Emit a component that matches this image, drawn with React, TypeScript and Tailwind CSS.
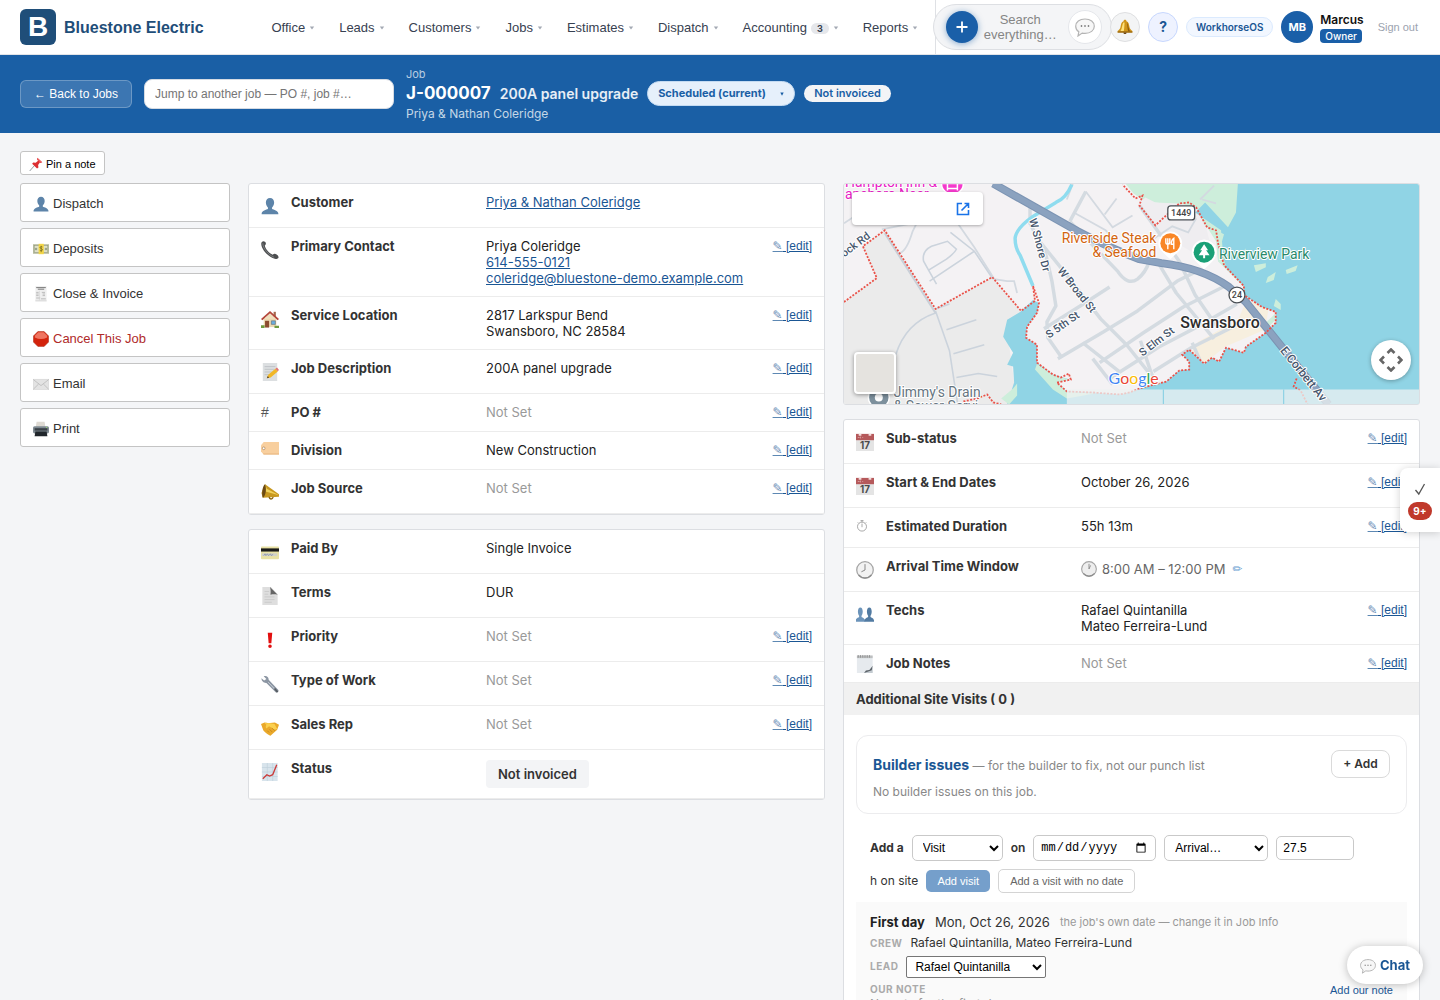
import type { ReactNode } from "react";

const navItems = [
  { label: "Office" },
  { label: "Leads" },
  { label: "Customers" },
  { label: "Jobs" },
  { label: "Estimates" },
  { label: "Dispatch" },
  { label: "Accounting", count: 3 },
  { label: "Reports" },
];

const sideActions = [
  { label: "Dispatch", icon: "person" },
  { label: "Deposits", icon: "money" },
  { label: "Close & Invoice", icon: "receipt" },
  { label: "Cancel This Job", icon: "stop", danger: true },
  { label: "Email", icon: "mail" },
  { label: "Print", icon: "printer" },
];

const bust = "M10 1c2.800 0 4.600 2.100 4.600 5.200 0 2.400-1 4.300-2.300 5.400v1.700c1.800.900 6.700 1.600 7 5.200v.800H.700v-.800c.300-3.600 5.200-4.300 7-5.200v-1.700C6.400 10.500 5.400 8.600 5.400 6.200 5.400 3.100 7.200 1 10 1z";

const calendar = (
  <>
    <rect x="0" y="1" width="20" height="19" fill="#e4e4e4" />
    <rect x="0" y="1" width="20" height="7" fill="#b5595b" />
    <path d="M3 1h3v2H3zM14 1h3v2h-3z" fill="#f3dcdc" />
    <path d="M2 5h2M5 4v2M7 5h1" stroke="#e2b4b4" strokeWidth=".8" />
    <text x="10" y="18" fontSize="11" fontWeight="700" textAnchor="middle" fill="#4b4b4b">17</text>
  </>
);

const drawings: Record<string, ReactNode> = {
  person: <path d={bust} fill="#5d84a9" />,
  people: (
    <>
      <g transform="translate(-1 2) scale(.58 .86)"><path d={bust} fill="#6c94ba" /></g>
      <g transform="translate(9 2) scale(.58 .86)"><path d={bust} fill="#527ba2" /></g>
    </>
  ),
  money: (
    <>
      <rect x="0" y="4" width="20" height="12" fill="#b8bda0" />
      <rect x="1.500" y="5.500" width="17" height="9" fill="#dfe0c8" stroke="#8e967b" strokeWidth=".7" />
      <rect x="7" y="3.500" width="6.500" height="13" fill="#f3d648" />
      <circle cx="3.800" cy="10" r="1.600" fill="#9ba58a" />
      <circle cx="16.200" cy="10" r="1.600" fill="#9ba58a" />
      <path d="M11.800 7.500c-1-.8-3-.5-3 .8s3 1.100 3 2.500-2.200 1.700-3.200.7M10.200 6v8" fill="none" stroke="#6b601f" strokeWidth=".9" />
    </>
  ),
  receipt: (
    <>
      <path d="M3 0h14v20H3z" fill="#efefef" />
      <path d="M4 2h12M6 4h8" stroke="#777" strokeWidth="1.200" />
      <path d="M4 8h3M4 10h3M4 12h3M4 15h5M11 8h4M12 10h3M12 12h3M10 16h6" stroke="#a9a9a9" strokeWidth=".9" />
      <path d="M8 6v12M3 18h14" stroke="#d0d0d0" strokeWidth=".7" />
    </>
  ),
  stop: (
    <>
      <path d="M6.200.500h7.600l5.700 5.700v7.600l-5.700 5.700H6.200L.500 13.800V6.200z" fill="#d3230c" stroke="#a62b16" strokeWidth=".6" />
      <path d="M6.600 1.500h6.800l4.300 4.500v2q-7.700 4-15.400 0V6z" fill="#ef7561" />
    </>
  ),
  mail: (
    <>
      <rect x="0" y="4" width="20" height="13" fill="#e3e3e3" stroke="#cfcfcf" strokeWidth=".6" />
      <path d="M.5 4.500 10 12l9.500-7.500M.5 16.500 7 10M19.500 16.500 13 10" fill="none" stroke="#b5b5b5" strokeWidth=".9" />
    </>
  ),
  printer: (
    <>
      <path d="M4.500 1h10l1 7h-12z" fill="#dedad3" />
      <rect x="0" y="6.500" width="20" height="9" rx="2" fill="#7f8a92" />
      <rect x="2" y="9" width="16" height="3" fill="#3a4147" />
      <path d="M3 13h14l1 6H2z" fill="#20262b" />
      <circle cx="17" cy="8" r=".7" fill="#9fdd6c" />
    </>
  ),
  pin: (
    <>
      <path d="m8 12-7 8" stroke="#8b9299" strokeWidth="1.300" />
      <path d="m12 1 7 6.500-2.500 1-1-.5-2.500 3.500.5 3.500-2 1.500-7-7L6 7.800l3.500.4L13 5.500l-1.500-1.500z" fill="#dc2f33" />
      <path d="m12.500 2 5.500 5-2 .5-4-3.500z" fill="#f1686a" />
    </>
  ),
  phone: (
    <>
      <path d="M1 1c1.500-1.300 4-.4 4.400 1.500.2 1.300-.7 2-1.200 2.900.9 3.900 5 8.400 8.800 10 .9-.8 1.800-1.400 3-1 2.100.6 4 2.800 3.400 4.300-.9 1.700-3.400 1.500-5 .8C7.600 16.900.6 9.200.300 3.500.200 2.600.300 1.600 1 1z" fill="#4c4e50" />
      <path d="M2 2.500c-.2 5 6 13 12.500 15.500" fill="none" stroke="#8b8e90" strokeWidth=".8" />
    </>
  ),
  house: (
    <>
      <path d="M3 9h14v10H3z" fill="#ecd8b0" />
      <path d="M14 2h2.500v6H14z" fill="#a5694e" />
      <path d="M10 1 0 10l1.500 1.500L10 4l8.500 7.500L20 10z" fill="#b4473b" />
      <path d="m10 4 6.500 5.800h-13z" fill="#f0dfbc" />
      <path d="M4.500 12H9v7.500H4.500z" fill="#8c4b2f" />
      <path d="M11.500 12H16v4h-4.500z" fill="#6aaede" stroke="#59636a" strokeWidth=".6" />
      <path d="M0 17h4v3H0zM15 17.500h5V20h-5z" fill="#6f9a3e" />
    </>
  ),
  memo: (
    <>
      <path d="M2 0h16v20H2z" fill="#dcdfe1" />
      <path d="M4 4h12M4 7h11M4 10h8M4 13h5" stroke="#b9bdc1" strokeWidth=".9" />
      <path d="m6.500 17 1.500-4 8-6.500 2.700 3-8 6.500z" fill="#f1b727" />
      <path d="m16 6.500 1.800-1.500 2.200 2.800-1.500 1.500z" fill="#e17272" />
      <path d="m6.500 17 1-2.600 1.600 1.900z" fill="#574632" />
    </>
  ),
  tag: (
    <>
      <path d="M3 0H20v14H3L0 10.500v-7z" fill="#f8cf9e" />
      <path d="M3 14H20v-1.200H2z" fill="#e8b67f" />
      <circle cx="3" cy="7" r="1.500" fill="#fff" stroke="#a98258" strokeWidth=".8" />
    </>
  ),
  horn: (
    <>
      <path d="M4.500 1.500 20 12.500v2.800L2 16.500.500 11z" fill="#c8981f" />
      <path d="m4.500 1.500 2 5L20 13.500l-15-4z" fill="#f1d25a" />
      <path d="M4.500 1.500C1.500 3 .5 13 2 16.500c2-.5 5-8 2.500-15z" fill="#6c4a13" />
      <path d="M9 15.500c.5 3 3.500 3.200 4.500.2" fill="none" stroke="#8b6716" strokeWidth="1.600" />
    </>
  ),
  card: (
    <>
      <rect x="0" y="4" width="20" height="14" rx="1" fill="#e8e1a4" />
      <rect x="0" y="6" width="20" height="3.500" fill="#191919" />
      <path d="M1 11.500h17v3H1z" fill="#d0d1ca" />
      <path d="m3 14 1.500-2 1 2 1.500-2 1.500 2 2-2 1 2 2-1.500" fill="none" stroke="#7682a3" strokeWidth=".7" />
    </>
  ),
  page: (
    <>
      <path d="M1.500 0H11l7.500 8v12h-17z" fill="#dedede" />
      <path d="M10 0c.8 3 1 5.500.5 8.500 3-.6 5.500-.5 8 0z" fill="#666" />
      <path d="M4 5h5M4 8h4M4 11h11M4 14h11M4 17h8" stroke="#c4c4c4" strokeWidth=".8" />
    </>
  ),
  bang: <path d="M7.500 2h5l-1 11.500h-3zM10 15a2 2 0 1 1 0 4 2 2 0 0 1 0-4z" fill="#e20f0f" />,
  wrench: (
    <>
      <path d="M3 1.500c2.500-1.500 5.800.5 5.500 3.800l10.800 11.300c.8 1.500-1.300 3.700-3 2.700L6 8.800C3.300 9.200.200 6.500.500 3.500L3.500 6 6 4.500z" fill="#8c96a3" />
      <path d="m8 8 9 9.500" stroke="#cfd5db" strokeWidth="1" />
      <path d="m15 15 3.500 4" stroke="#565c62" strokeWidth="2" />
    </>
  ),
  shake: (
    <>
      <path d="M0 5.500 4 4c2 .3 3.500.8 6 .5l5.500-.5L20 6.500 18 12l-7.500 6.500c-1.500 0-6-3.500-8-6z" fill="#eaa92a" />
      <path d="M4 4.500c3 .5 6-.5 11 1l3 5.500-3 1-6-4-3 2.500C5 9.500 5 8 6 6.500z" fill="#fbd04e" />
      <path d="m7 13 2 2M9.500 11.500l3 3M12 10l3.500 3" stroke="#bf7f18" strokeWidth=".8" />
    </>
  ),
  chart: (
    <>
      <path d="M1 0h17.500v20H1z" fill="#d8e4ec" />
      <path d="M1 5h17.500M1 10h17.500M1 15h17.500M7 0v20M13 0v20" stroke="#bdcfda" strokeWidth=".7" />
      <path d="m2 17.500 4.500-4.500 3 1.500L13 13l4.500-11" fill="none" stroke="#cb3a39" strokeWidth="1.500" />
    </>
  ),
  calendar,
  stopwatch: (
    <>
      <circle cx="10" cy="11" r="7.500" fill="none" stroke="#888" strokeWidth="1.200" />
      <path d="M10 3.500V1M7.500 1h5M10 6v6M15.500 5.500 17 4M4.500 5.500 3 4" stroke="#888" strokeWidth="1.200" />
    </>
  ),
  clock8: (
    <>
      <circle cx="10" cy="10" r="9.200" fill="#f2f2f2" stroke="#a4a4a4" strokeWidth="1.400" />
      <path d="M10 3.500V10l-4 2" fill="none" stroke="#888" strokeWidth="1.100" />
      <path d="M3 15.500a9 9 0 0 0 14 0" fill="none" stroke="#8d8d8d" strokeWidth="1.400" />
    </>
  ),
  clock1: (
    <>
      <circle cx="10" cy="10" r="9.200" fill="#eee" stroke="#a4a4a4" strokeWidth="1.400" />
      <path d="M10 3.500V10l2-4.500" fill="none" stroke="#888" strokeWidth="1.100" />
      <path d="M3 15.500a9 9 0 0 0 14 0" fill="none" stroke="#8d8d8d" strokeWidth="1.400" />
    </>
  ),
  notepad: (
    <>
      <path d="M1 1h17.500v19H1z" fill="#e6eaee" />
      <path d="M1 .5h17.500v3H1z" fill="#bdbfc0" />
      <path d="M2.500 0v3M5 0v3M7.500 0v3M10 0v3M12.500 0v3M15 0v3" stroke="#7d7d7d" strokeWidth=".7" />
      <path d="m9 20 9.500-6V20z" fill="#c3cad0" />
      <path d="m9 20 2-2.800 4-.5 3.500-4.700-1 5z" fill="#5b6268" />
    </>
  ),
  bubble: (
    <>
      <path d="M10 2c5.500 0 9.300 3 9.300 7.200s-3.800 7.200-9.300 7.200c-1 0-2-.1-2.800-.3L3 19l.8-4.200C1.800 13.500.700 11.500.700 9.200.700 5 4.500 2 10 2z" fill="#f7f7f7" stroke="#b4b4b4" strokeWidth="1.200" />
      <path d="M5.800 8.300h1.400v1.400H5.800zM9.300 8.300h1.400v1.400H9.300zM12.800 8.300h1.400v1.400h-1.400z" fill="#666" />
    </>
  ),
  bell: (
    <>
      <path d="M10 1c1.300 0 1.800.8 1.800 1.700 2.700 1 3.300 3.700 3.700 6.800.4 2.700 1.500 4 3.700 5.500v2H.800v-2c2.200-1.500 3.300-2.800 3.700-5.500.4-3.100 1-5.800 3.700-6.800C8.200 1.800 8.700 1 10 1z" fill="#d0951a" />
      <path d="M8 4.500c-1.500 2-1.500 7-3.500 10.500h4c.8-3.500.6-7 1-10.500z" fill="#ffe27a" />
      <path d="M12.500 4c2 3 1.500 8 4 11.500H14c-1-3.500-1-7.500-1.500-11.500z" fill="#8d5c10" />
      <path d="M.8 15.500h18.400V17H.800z" fill="#94620f" />
      <path d="M8 17h4c0 2.500-4 2.500-4 0z" fill="#6a4410" />
    </>
  ),
};

function Glyph({ name, className = "size-[18px]" }: { name: string; className?: string }) {
  return (
    <svg viewBox="0 0 20 20" className={`shrink-0 ${className}`} aria-hidden="true">
      {drawings[name]}
    </svg>
  );
}

function EditLink() {
  return (
    <a
      href="#edit"
      className="block font-['Liberation_Sans',sans-serif] text-xs leading-4 text-[#1a5694] underline"
    >
      <span className="font-['DejaVu_Sans',sans-serif] opacity-70">✎</span> [edit]
    </a>
  );
}

type RowProps = { icon: string; label: string; children?: ReactNode; edit?: boolean; size?: "sm" | "md" | "lg" };

function Row({ icon, label, children, edit, size = "lg" }: RowProps) {
  const heights = { sm: "h-[17px]", md: "h-[19px]", lg: "h-[23px] pt-[3px]" };
  return (
    <div className="grid grid-cols-[18px_183px_1fr_auto] gap-x-3 border-b border-[#ececec] px-3 py-2.5 text-[13px] leading-4">
      <div className={heights[size]}>
        {icon === "#" ? (
          <span className="font-['Liberation_Sans',sans-serif] text-sm leading-4 text-[#555]">#</span>
        ) : (
          <Glyph name={icon} className={icon === "stopwatch" ? "mt-0.5 size-3" : "size-[18px]"} />
        )}
      </div>
      <dt className="font-bold text-[#333]">{label}</dt>
      <dd className="text-[#222]">{children ?? <span className="text-[#999]">Not Set</span>}</dd>
      <dd>{edit && <EditLink />}</dd>
    </div>
  );
}

function TopBar() {
  return (
    <header className="flex h-[55px] shrink-0 items-center border-b border-[#e2e4e8] bg-white pl-5 pr-[22px] font-['Liberation_Sans',sans-serif]">
      <a href="#home" className="flex shrink-0 items-center gap-2">
        <span className="flex size-9 items-center justify-center rounded-md bg-[#1f4e79] text-[28px] font-bold leading-none text-white">
          B
        </span>
        <span className="pt-0.5 text-base font-bold text-[#1f4e79]">Bluestone Electric</span>
      </a>
      <nav className="flex flex-1 shrink-0 items-center justify-end pr-[5px] pt-0.5 text-[13px] text-[#374151]">
        {navItems.map((item) => (
          <a key={item.label} href={`#${item.label}`} className="flex items-center gap-1 px-3">
            {item.label}
            {item.count && (
              <span className="rounded-full bg-[#e5e7eb] px-1.5 font-['Inter',sans-serif] text-[9px] font-bold leading-[11px] text-[#374151]">
                {item.count}
              </span>
            )}
            <svg viewBox="0 0 6 4" className="h-1 w-1.5" aria-hidden="true">
              <path d="M.8.500h4.400L3 3.500z" fill="#a3a9b3" />
            </svg>
          </a>
        ))}
      </nav>
      <div className="flex h-full shrink-0 items-center border-l border-[#dfe1e5] font-['Inter',sans-serif]">
        <div className="-ml-[3px] flex h-[46px] w-[179px] items-center rounded-full border border-[#dddfe3] bg-[#f4f5f7] px-3 pr-[9px]">
          <button
            aria-label="New"
            className="flex size-8 items-center justify-center rounded-full bg-[#1a5fa8] shadow-[0_1px_6px_rgba(26,95,168,0.5)]"
          >
            <svg viewBox="0 0 12 12" className="size-3" aria-hidden="true">
              <path d="M6 .5v11M.5 6h11" stroke="#fff" strokeWidth="1.800" />
            </svg>
          </button>
          <button className="ml-0.5 w-20 text-center font-['Liberation_Sans',sans-serif] text-[13px] leading-[15px] text-[#858585]">
            Search everything…
          </button>
          <button
            aria-label="Messages"
            className="ml-auto flex size-[34px] items-center justify-center rounded-full border border-[#e5e7eb] bg-white"
          >
            <Glyph name="bubble" className="size-5" />
          </button>
        </div>
        <button
          aria-label="Notifications"
          className="-ml-0.5 flex size-[30px] items-center justify-center rounded-full border border-[#dedfe1] bg-[#f3f4f5]"
        >
          <Glyph name="bell" className="size-4" />
        </button>
        <button className="ml-2 size-[30px] rounded-full border border-[#c7d7fe] bg-[#eef2ff] text-sm font-bold text-[#1a5694]">?</button>
        <a
          href="#workhorse"
          className="ml-2 w-[87px] rounded-full border border-[#dbeafe] bg-[#f2f7ff] text-center text-[10px] font-semibold leading-[18px] text-[#1a5694]"
        >
          WorkhorseOS
        </a>
        <span className="ml-2 flex size-8 items-center justify-center rounded-full bg-[#1a5fa8] text-[11px] font-bold text-white">MB</span>
        <div className="ml-[7px] flex flex-col items-start">
          <span className="text-xs font-semibold leading-[18px] text-[#111]">Marcus</span>
          <span className="rounded bg-[#1a5fa8] px-[5px] text-[10px] font-medium leading-[14px] text-white">Owner</span>
        </div>
        <button className="ml-3.5 font-['Liberation_Sans',sans-serif] text-[11px] text-[#9ca3af]">Sign out</button>
      </div>
    </header>
  );
}

function JobBar() {
  return (
    <section className="flex shrink-0 items-center gap-3 bg-[#1a5fa5] px-5 py-3 text-white">
      <a
        href="#jobs"
        className="w-28 rounded-md border border-white/25 bg-white/15 text-center font-['Liberation_Sans',sans-serif] text-xs leading-[26px]"
      >
        ← Back to Jobs
      </a>
      <input
        type="search"
        aria-label="Jump to another job"
        placeholder="Jump to another job — PO #, job #…"
        className="h-[30px] w-[250px] rounded-lg border border-[#d5dbe3] bg-white px-2.5 font-['Liberation_Sans',sans-serif] text-xs text-[#222] placeholder:text-[#757575]"
      />
      <div>
        <p className="text-[11px] leading-[14px] text-white/70">Job</p>
        <div className="flex h-[25px] items-center gap-[9px]">
          <h1 className="text-[17px] font-bold">J-000007</h1>
          <span className="text-sm font-semibold text-white/90">200A panel upgrade</span>
          <div className="flex h-[25px] items-center rounded-full border border-[#c4dbf2] bg-[#e6f0fb] pl-2.5 pr-2 text-[#1a5fa5]">
            <select aria-label="Job status" className="w-[120px] appearance-none text-[11px] font-bold">
              <option>Scheduled (current)</option>
            </select>
            <svg viewBox="0 0 4 4" className="mx-0.5 size-1" aria-hidden="true">
              <path d="M.3.500h3.400L2 3.700z" fill="#1a5fa5" />
            </svg>
          </div>
          <span className="rounded-full bg-[#f3f4f6] px-2.5 text-[11px] font-semibold leading-[17px] text-[#1a5fa5]">Not invoiced</span>
        </div>
        <p className="text-xs leading-[15px] text-white/75">Priya &amp; Nathan Coleridge</p>
      </div>
    </section>
  );
}

function MapDrawing() {
  const halo = { stroke: "#fff", strokeWidth: 2, paintOrder: "stroke" as const, strokeLinejoin: "round" as const };
  const highway = "M150 0l85 48q30 16 62 28l22 4q42 5 68 24l17 15 36 45 47 58";
  return (
    <svg
      viewBox="0 0 578 222"
      preserveAspectRatio="xMidYMid slice"
      className="block size-full font-['Roboto',sans-serif]"
      role="img"
      aria-label="Map of Swansboro"
    >
      <rect width="578" height="222" fill="#f4f2f4" />
      <path d="M0 119 33 95 19 63 41 47 92 126l57-32 29 34-14 20 10 74H0z" fill="#ebebeb" />
      <path d="m283 0 8 10 12 8 38 4 24 22 9 4 2 30 26 26 10-104z" fill="#cdeedb" />
      <path d="m303 14 10 5 24 1 17 4 10 20 4 16-2 18-52-30-18-28z" fill="#efedf0" />
      <path d="m405 117 22 8-4 22-40 17-20 16-15-9 8-12 40-22z" fill="#f7efdf" />

      {/* streets */}
      <g fill="none" stroke="#d4dbe1" strokeWidth="3.500" strokeLinejoin="round">
        <path d="m187 24 0 16 16 32 6 26 4 25-9 16 1 16 14 20M195 56l29 36 34 44 26 26 24 30M227 38l48 50q10 15 20 8 8-6 12-18M297 22l40 56 16 34 22 32M243 8l-16 30M240 160l38 30M316 80l18 30 38 46" />
        <path d="m215 176 46-27 34-21 40-30 22-11M257 180l44-30 40-26 44-22M267 196l50-32 40-21 38-22M201 146l38-24 28-18M250 176l20 26M298 158l10 30 4 10M311 189l38-24 50-25M350 160l8 18" />
      </g>
      <path
        d="M0 40 30 20 60 8M38 46l30-6 10-8 28-4 25 36 20 32 13 2 7 0 3 12M73 40l-4 8q-6 20-13 22M231 29l32 18 8 8M262 31l12-16M243 8l27 36 20-12M312 55l18-12 16 6 8-14M358 16l14-14M360 16l14 4M230 0l-6 16"
        fill="none"
        stroke="#d3d9e0"
        strokeWidth="1.800"
      />
      <path
        d="m107 49 24 19 18 27M131 68l-45 30M92 130q-30 10-40 42M92 128l14 40 8 52M92 126l14-5M103 147l30-10M110 171l31-9M113 195l22-4 19 3"
        fill="none"
        stroke="#cbd3dc"
        strokeWidth="1.600"
      />
      <path d="M80 78q-2-10 8-15l16-5 9 8q-2 4-10 10l-18 11zM85 87l8 14" fill="none" stroke="#cbd3dc" strokeWidth="1.600" />
      <path d="M41 50 92 130" stroke="#c9d0d8" strokeWidth="2" />

      {/* water */}
      <path
        d="M164 222 171 200 170 184l-6-2 6-12-10-16 4-17 13-8 13-12 6 3-2 10-10 14-1 11 11 7v18l16 12 17 5-13 3 10 9 26 1 27 2 10-2 13-5 12-3 12-3 13-11 10-1v-8l-7-7 7-5 15 14 8-6 7 4 7-14 18 5 2-6 20-14 10-10v-11l-14-5-18-12v-9l-20-21-3-35-26-18 10-10 23 25 8-15 2-30H578V222z"
        fill="#90d4e5"
      />
      <path d="m365 44 9 3 8 4-4 14 6 18-8-5-2-20z" fill="#cdeedb" />
      <path d="m194 181 17 12 16 4-13 3 10 9 28 2-28 5-14-9-18-20z" fill="#cdeedb" />
      <path d="m158 216 12-10 4-5v12l-8 9z" fill="#cdeedb" />
      <path d="m412 82 12-2 0 4-10 5zM426 94l8-5-2 8-8 3zM444 87l12-5-2 6-9 3zM400 70l4-5-2 10zM434 116l5 5 0 6-7-4zM425 139l8-8 1 6-8 8z" fill="#cdeedb" />
      <path d="M229 1q-6 14-16 18l-23 14q-17 12-18 22 0 10 5 17l13 31" fill="none" stroke="#8fdcef" strokeWidth="3.500" />

      {/* highway */}
      <path d={highway} fill="none" stroke="#7c94b3" strokeWidth="8" />
      <path d={highway} fill="none" stroke="#8ba2bf" strokeWidth="6" />

      {/* city limits */}
      <g fill="none" stroke="#ea5148" strokeWidth="1.800" strokeDasharray="2 1.500">
        <path d="M0 119 33 95 19 63 41 47 92 126l57-32 29 34 14-10-2-15" />
        <path d="m190 103 6 17-2 10-10 14-1 11 11 7v18l16 12 8 3 8-4 2 6-14 3 10 9 26 1 27 2 10-2 13-5 12-3 12-3 13-11 10-1v-8l-7-7 7-5 15 14 8-6 7 4 7-14 18 5 2-6 20-14 10-10v-11l-14-5-18-12v-9l-20-21-6-22-2-13-9-3-11-20-7-5-10 1-24 22-16-20 3-10-7 3-13-14" />
        <path d="m120 219 14-3 10-4 6 8 8 2M455 196l-3 8 7 4 7 14" />
      </g>
      <path d="M224 207h354v15H224z" fill="#eef1f2" opacity=".75" />
      <path d="M321 207v15M442 207v15" stroke="#7fcde2" />

      {/* labels */}
      <g fontSize="14" {...halo}>
        <g fill="#e820c5">
          <text x="1" y="3">Hampton Inn &amp;</text>
          <text x="1" y="16">ansboro Near...</text>
        </g>
        <g fill="#d3650f" textAnchor="end">
          <text x="314" y="60">Riverside Steak</text>
          <text x="314" y="74">&amp; Seafood</text>
        </g>
        <text x="377" y="76" fill="#278a6b">Riverview Park</text>
        <g fill="#66757f">
          <text x="50" y="215">Jimmy&apos;s Drain</text>
          <text x="50" y="229">&amp; Sewer Servi...</text>
        </g>
        <text x="338" y="145" fontSize="16" fontWeight="500" fill="#2c2c2c">Swansboro</text>
      </g>
      <g fontSize="11" fontWeight="500" fill="#46566c" {...halo}>
        <text transform="translate(186 36) rotate(75)">W Shore Dr</text>
        <text transform="translate(214 88) rotate(51)">W Broad St</text>
        <text transform="translate(206 156) rotate(-35)">S 5th St</text>
        <text transform="translate(300 174) rotate(-37)">S Elm St</text>
        <text transform="translate(-2 76) rotate(-37)">lock Rd</text>
        <text transform="translate(438 168) rotate(51)" fontSize="12">E Corbett Av</text>
      </g>
      <rect x="325.500" y="22.500" width="27" height="14" rx="3" fill="#fff" stroke="#4a4f55" strokeWidth="1.300" />
      <text x="339" y="33" fontSize="9" fontWeight="500" textAnchor="middle" fill="#444">1449</text>
      <circle cx="395" cy="112" r="8" fill="#fff" stroke="#4a4f55" strokeWidth="1.300" />
      <text x="395" y="115.500" fontSize="9" fontWeight="500" textAnchor="middle" fill="#444">24</text>

      {/* pins */}
      <g stroke="#fff" strokeWidth="1.500">
        <path d="M98 0h22q0 7-7 10l-4 3-4-3q-7-3-7-10z" fill="#f439cc" />
        <path d="M328 49a11 11 0 0 1 6.500 20L328 75l-6.500-6A11 11 0 0 1 328 49z" fill="#fff" />
        <path d="M362 57a12 12 0 0 1 7 21.500L362 85l-7-6.500A12 12 0 0 1 362 57z" fill="#fff" />
      </g>
      <path d="M104 0v7M114 0v7M104 5h10" stroke="#fff" strokeWidth="1.500" />
      <circle cx="328" cy="60" r="10" fill="#f98626" />
      <path d="M323.500 55v4a2 2 0 0 0 4 0v-4M325.500 55v11M331.500 66V55c-2.500 1.500-2.500 4-2.500 6h2.500" fill="none" stroke="#fff" strokeWidth="1.400" />
      <circle cx="362" cy="69" r="10.500" fill="#1aa177" />
      <path d="m362 61 4 6h-2l3.500 5H363v3h-2v-3h-4.500l3.500-5h-2z" fill="#fff" />
      <circle cx="35" cy="215" r="10.500" fill="#7d909d" stroke="#fff" strokeWidth="1.500" />
      <circle cx="35" cy="215" r="4" fill="#fff" />

      <text x="266" y="201" fontSize="16" className="font-['Lato',sans-serif]" stroke="#fff" strokeWidth="2" paintOrder="stroke">
        <tspan fill="#4285f4">G</tspan>
        <tspan fill="#ea4335">o</tspan>
        <tspan fill="#fbbc05">o</tspan>
        <tspan fill="#4285f4">g</tspan>
        <tspan fill="#34a853">l</tspan>
        <tspan fill="#ea4335">e</tspan>
      </text>
    </svg>
  );
}

function MapCard() {
  return (
    <div className="relative h-[222px] overflow-hidden rounded-[3px] border border-[#dcdee2]">
      <MapDrawing />
      <a
        href="#open-map"
        aria-label="Open in Maps"
        className="absolute left-2 top-2 flex h-[33px] w-[131px] items-center justify-end rounded-sm bg-white pr-3 shadow-[0_1px_3px_rgba(0,0,0,0.3)]"
      >
        <svg viewBox="0 0 16 16" className="size-4" fill="none" stroke="#1a73e8" strokeWidth="1.600" aria-hidden="true">
          <path d="M7 2.500H2.500v11h11V9M9.500 2.500h4V7M13.500 2.500 6.500 9.500" />
        </svg>
      </a>
      <button
        aria-label="Satellite view"
        className="absolute bottom-2.5 left-2.5 size-[42px] rounded border-2 border-white bg-[#e5e3df] shadow-[0_1px_4px_rgba(0,0,0,0.4)]"
      />
      <button
        aria-label="Map camera controls"
        className="absolute bottom-6 right-2 flex size-10 items-center justify-center rounded-full bg-white shadow-[0_1px_4px_rgba(0,0,0,0.3)]"
      >
        <svg viewBox="0 0 24 24" className="size-6" fill="none" stroke="#666" strokeWidth="2.600" aria-hidden="true">
          <path d="m8.500 5 3.500-3.500L15.500 5M8.500 19l3.500 3.500 3.500-3.500M5 8.500 1.500 12 5 15.500M19 8.500l3.500 3.500-3.500 3.500" />
        </svg>
      </button>
    </div>
  );
}

const control = "rounded-[5px] border border-[#c9c9c9] bg-white font-['Liberation_Sans',sans-serif] text-xs text-black";

function SiteVisits() {
  return (
    <div className="px-3 pt-5 text-xs">
      <section className="rounded-xl border border-[#ececee] px-4 pb-3 pt-3.5 text-[#888]">
        <div className="flex h-7 items-center justify-between">
          <p className="pt-0.5">
            <strong className="text-sm font-bold text-[#1a5694]">Builder issues</strong> — for the builder to fix, not our punch list
          </p>
          <button className="h-7 w-[59px] rounded-lg border border-[#dadada] bg-white font-semibold text-[#333]">+ Add</button>
        </div>
        <p className="mt-[5px] leading-[18px]">No builder issues on this job.</p>
      </section>

      <form className="mt-[21px] flex flex-wrap items-center gap-2 px-3.5 text-[#333]">
        <label htmlFor="visit-type" className="font-bold">Add a</label>
        <select id="visit-type" className={`h-[26px] w-[91px] px-1.5 ${control}`}>
          <option>Visit</option>
        </select>
        <label htmlFor="visit-date" className="font-semibold">on</label>
        <input
          id="visit-date"
          type="date"
          className="h-[26px] w-[123px] rounded-[5px] border border-[#c9c9c9] bg-white px-1.5 font-['Liberation_Mono',monospace] text-xs text-black"
        />
        <select aria-label="Arrival window" className={`h-[26px] w-[104px] px-1.5 ${control}`}>
          <option>Arrival…</option>
        </select>
        <input id="visit-hours" type="text" defaultValue="27.5" className={`h-6 w-[78px] px-1.5 ${control}`} />
        <label htmlFor="visit-hours">h on site</label>
        <button type="button" className="h-[22px] w-16 rounded-[5px] bg-[#759fcb] font-['Liberation_Sans',sans-serif] text-[11px] text-white">
          Add visit
        </button>
        <button type="button" className="h-6 w-[137px] rounded-[5px] border border-[#d4d4d4] bg-white font-['Liberation_Sans',sans-serif] text-[11px] text-[#666]">
          Add a visit with no date
        </button>
      </form>

      <section className="mt-[9px] bg-[#fafafa] px-3.5 pb-4 pt-2.5 text-[#333]">
        <div className="flex items-center gap-2.5 text-[13px] leading-5">
          <strong className="font-bold text-[#222]">First day</strong>
          <span>Mon, Oct 26, 2026</span>
          <span className="text-[11px] text-[#999]">the job&apos;s own date — change it in Job Info</span>
        </div>
        <div className="flex items-center gap-2 leading-[22px]">
          <span className="text-[10px] font-bold tracking-wider text-[#aaa]">CREW</span>
          <span>Rafael Quintanilla, Mateo Ferreira-Lund</span>
        </div>
        <div className="flex h-[26px] items-center gap-2">
          <label htmlFor="lead" className="text-[10px] font-bold tracking-wider text-[#aaa]">LEAD</label>
          <select id="lead" className="h-[22px] w-[140px] rounded-xs border border-[#767676] bg-white px-1 font-['Liberation_Sans',sans-serif] text-xs text-black">
            <option>Rafael Quintanilla</option>
          </select>
        </div>
        <div className="mt-0.5 flex h-4 items-center justify-between">
          <span className="text-[10px] font-bold tracking-wider text-[#aaa]">OUR NOTE</span>
          <button className="font-['Liberation_Sans',sans-serif] text-[11px] text-[#1a5694]">Add our note</button>
        </div>
        <p className="leading-3 text-[#999]">No note for the first day.</p>
      </section>
    </div>
  );
}

export default function App() {
  return (
    <div className="flex h-screen flex-col overflow-y-auto bg-[#f4f5f7] font-['Inter',sans-serif] [scrollbar-width:none]">
      <TopBar />
      <JobBar />

      <main className="px-5 pt-[18px]">
        <button className="flex h-6 items-center gap-[3px] rounded-[3px] border border-[#c4c4c4] bg-white px-2 pt-0.5 font-['Liberation_Sans',sans-serif] text-[11px] text-black">
          <Glyph name="pin" className="size-3.5" />
          Pin a note
        </button>

        <div className="mt-2 grid grid-cols-[210px_1fr_1fr] items-start gap-x-[18px]">
          {/* Actions */}
          <aside className="flex flex-col gap-1.5">
            {sideActions.map((action) => (
              <button
                key={action.label}
                className={`flex h-[39px] items-center gap-1 rounded-[3px] border border-[#c4c4c4] bg-white px-3 pt-0.5 font-['Liberation_Sans',sans-serif] text-[13px] ${action.danger ? "text-[#b02a2a]" : "text-[#333]"}`}
              >
                <Glyph name={action.icon} className="size-4" />
                {action.label}
              </button>
            ))}
          </aside>

          {/* Job details */}
          <div className="flex flex-col gap-3.5">
            <dl className="rounded-[3px] border border-[#dcdee2] bg-white">
              <Row icon="person" label="Customer">
                <a href="#customer" className="text-[#1a5694] underline">Priya &amp; Nathan Coleridge</a>
              </Row>
              <Row icon="phone" label="Primary Contact" edit>
                <p>Priya Coleridge</p>
                <a href="tel:6145550121" className="block text-[#1a5694] underline">614-555-0121</a>
                <a href="#mail" className="block text-[#1a5694] underline">coleridge@bluestone-demo.example.com</a>
              </Row>
              <Row icon="house" label="Service Location" edit>
                2817 Larkspur Bend
                <br />
                Swansboro, NC 28584
              </Row>
              <Row icon="memo" label="Job Description" edit>200A panel upgrade</Row>
              <Row icon="#" label="PO #" edit size="sm" />
              <Row icon="tag" label="Division" edit size="sm">New Construction</Row>
              <Row icon="horn" label="Job Source" edit />
            </dl>
            <dl className="rounded-[3px] border border-[#dcdee2] bg-white">
              <Row icon="card" label="Paid By">Single Invoice</Row>
              <Row icon="page" label="Terms">DUR</Row>
              <Row icon="bang" label="Priority" edit />
              <Row icon="wrench" label="Type of Work" edit />
              <Row icon="shake" label="Sales Rep" edit />
              <Row icon="chart" label="Status">
                <span className="inline-block rounded bg-[#f3f4f6] px-3 font-semibold leading-7 text-[#333]">Not invoiced</span>
              </Row>
            </dl>
          </div>

          {/* Location and schedule */}
          <div className="flex flex-col gap-3.5">
            <MapCard />
            <div className="rounded-[3px] border border-[#dcdee2] bg-white">
              <dl>
                <Row icon="calendar" label="Sub-status" edit />
                <Row icon="calendar" label="Start & End Dates" edit>October 26, 2026</Row>
                <Row icon="stopwatch" label="Estimated Duration" edit size="md">55h 13m</Row>
                <Row icon="clock8" label="Arrival Time Window">
                  <span className="flex items-center gap-[5px] pt-[3px] text-[#666]">
                    <Glyph name="clock1" className="size-4" />
                    8:00 AM – 12:00 PM
                    <button aria-label="Edit arrival window" className="ml-0.5 font-['DejaVu_Sans',sans-serif] text-xs leading-4 text-[#6d9fd3]">✏</button>
                  </span>
                </Row>
                <Row icon="people" label="Techs" edit>
                  Rafael Quintanilla
                  <br />
                  Mateo Ferreira-Lund
                </Row>
                <Row icon="notepad" label="Job Notes" edit size="sm" />
              </dl>
              <h2 className="bg-[#f1f1f1] px-3 text-[13px] font-bold leading-8 text-[#333]">Additional Site Visits ( 0 )</h2>
              <SiteVisits />
            </div>
          </div>
        </div>
      </main>

      <button
        aria-label="Open tasks"
        className="fixed right-0 top-[468px] flex h-16 w-10 flex-col items-center justify-center gap-1 rounded-l-lg bg-white shadow-[0_1px_8px_rgba(0,0,0,0.18)]"
      >
        <svg viewBox="0 0 12 14" className="my-0.5 h-3.5 w-3" fill="none" stroke="#555" strokeWidth="1.300" aria-hidden="true">
          <path d="m1.500 8 3.300 4L10.500 2" />
        </svg>
        <span className="rounded-full bg-[#c0392b] px-[5px] text-[10px] font-bold leading-[18px] text-white">9+</span>
      </button>
      <button className="fixed bottom-4 right-[17px] flex h-[38px] w-[76px] items-center justify-center gap-1 rounded-full bg-white pt-0.5 text-[13px] font-bold text-[#1a5694] shadow-[0_1px_8px_rgba(0,0,0,0.25)]">
        <Glyph name="bubble" className="size-4" />
        Chat
      </button>
    </div>
  );
}
